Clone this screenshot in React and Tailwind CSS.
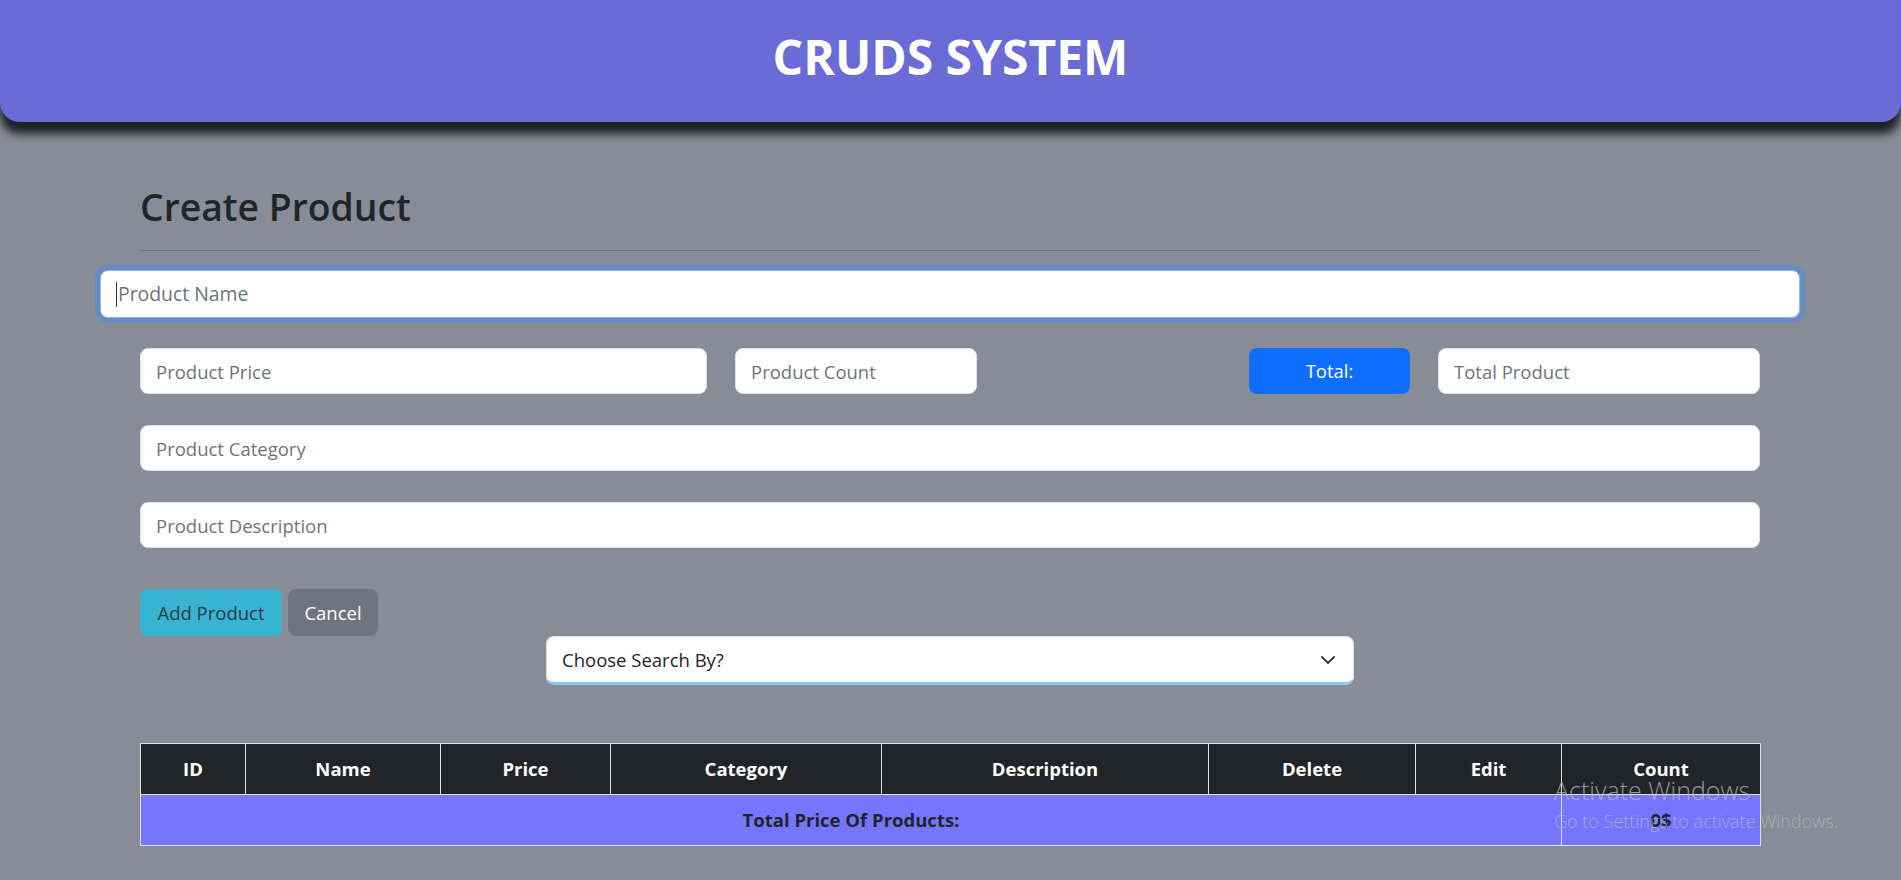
import React from "react";

const cols = [105, 195, 170, 271, 327, 207, 146, 199];
const heads = ["ID", "Name", "Price", "Category", "Description", "Delete", "Edit", "Count"];

function Field({ label, className = "" }) {
  return (
    <div
      className={
        "h-[46px] flex items-center pl-[15px] pr-4 pt-px bg-white border border-[#dee2e6] rounded-lg text-[18.5px] text-[#6c757d] " +
        className
      }
    >
      {label}
    </div>
  );
}

export default function App() {
  return (
    <div className="relative min-h-screen bg-[#878c96] font-['Open_Sans',sans-serif] overflow-hidden">
      <header className="relative z-10 h-[122px] bg-[#6a6bd6] rounded-b-[20px] shadow-[0_12px_9px_#202226] pt-[28px]">
        <h1 className="text-center text-white font-bold text-[48px] leading-[58px]">CRUDS SYSTEM</h1>
      </header>

      <main className="ml-[140px] w-[1620px] flex flex-col">
        <h2 className="mt-[61px] text-[37.3px] leading-[48px] font-semibold text-[#212529]">Create Product</h2>
        <div className="mt-[19px] h-px bg-[#6e727b]" />

        <div className="mt-[19px] -mx-[40px] h-[48px] flex items-center pl-[15px] bg-white border border-[#86b7fe] rounded-lg shadow-[0_0_0_5px_#6a8ac4] text-[19.4px] text-[#6c757d]">
          <span className="w-px h-[25px] bg-[#333] mr-px" />
          Product Name
        </div>

        <div className="mt-[30px] flex justify-between">
          <div className="flex gap-[28px]">
            <Field label="Product Price" className="w-[567px]" />
            <Field label="Product Count" className="w-[242px]" />
          </div>
          <div className="flex gap-[28px]">
            <div className="w-[161px] h-[46px] flex items-center justify-center rounded-lg bg-[#0d6efd] text-white text-[18.5px]">
              Total:
            </div>
            <Field label="Total Product" className="w-[322px]" />
          </div>
        </div>

        <Field label="Product Category" className="mt-[31px]" />
        <Field label="Product Description" className="mt-[31px]" />

        <div className="mt-[41px] flex gap-[6px]">
          <div className="w-[142px] h-[47px] flex items-center justify-center rounded-lg bg-[#37b4d2] text-[#2c3a44] text-[18.5px]">
            Add Product
          </div>
          <div className="w-[90px] h-[47px] flex items-center justify-center rounded-lg bg-[#6f7480] text-white text-[18.5px]">
            Cancel
          </div>
        </div>

        <div className="mx-auto w-[808px] h-[49px] flex items-center justify-between pl-[15px] pr-[17px] bg-white border border-[#dee2e6] border-b-[3px] border-b-[#8dc8f2] rounded-lg text-[18.5px] text-[#212529]">
          <span>Choose Search By?</span>
          <svg width="16" height="16" viewBox="0 0 16 16" fill="none" stroke="#343a40" strokeWidth="2" strokeLinecap="round" strokeLinejoin="round">
            <path d="M2 5l6 6 6-6" />
          </svg>
        </div>

        <table className="mt-[58px] w-[1620px] table-fixed border-collapse text-[18.5px]">
          <colgroup>
            {cols.map((w, i) => (
              <col key={i} style={{ width: w }} />
            ))}
          </colgroup>
          <thead>
            <tr className="h-[51px] bg-[#212529] text-white">
              {heads.map((h) => (
                <th key={h} className="border border-[#dee2e6] font-bold text-center p-0">
                  {h}
                </th>
              ))}
            </tr>
          </thead>
          <tbody>
            <tr className="h-[51px] bg-[#7575ff] text-[#212529] font-bold">
              <td colSpan={7} className="border border-[#dee2e6] text-center p-0">
                Total Price Of Products:
              </td>
              <td className="border border-[#dee2e6] text-center p-0">0$</td>
            </tr>
          </tbody>
        </table>
      </main>

      <div className="absolute left-[1554px] top-[773px] text-[rgba(185,188,196,0.75)] font-light pointer-events-none">
        <div className="text-[25px] leading-[34px]">Activate Windows</div>
        <div className="text-[18px] leading-[24px] mt-[2px]">Go to Settings to activate Windows.</div>
      </div>
    </div>
  );
}
